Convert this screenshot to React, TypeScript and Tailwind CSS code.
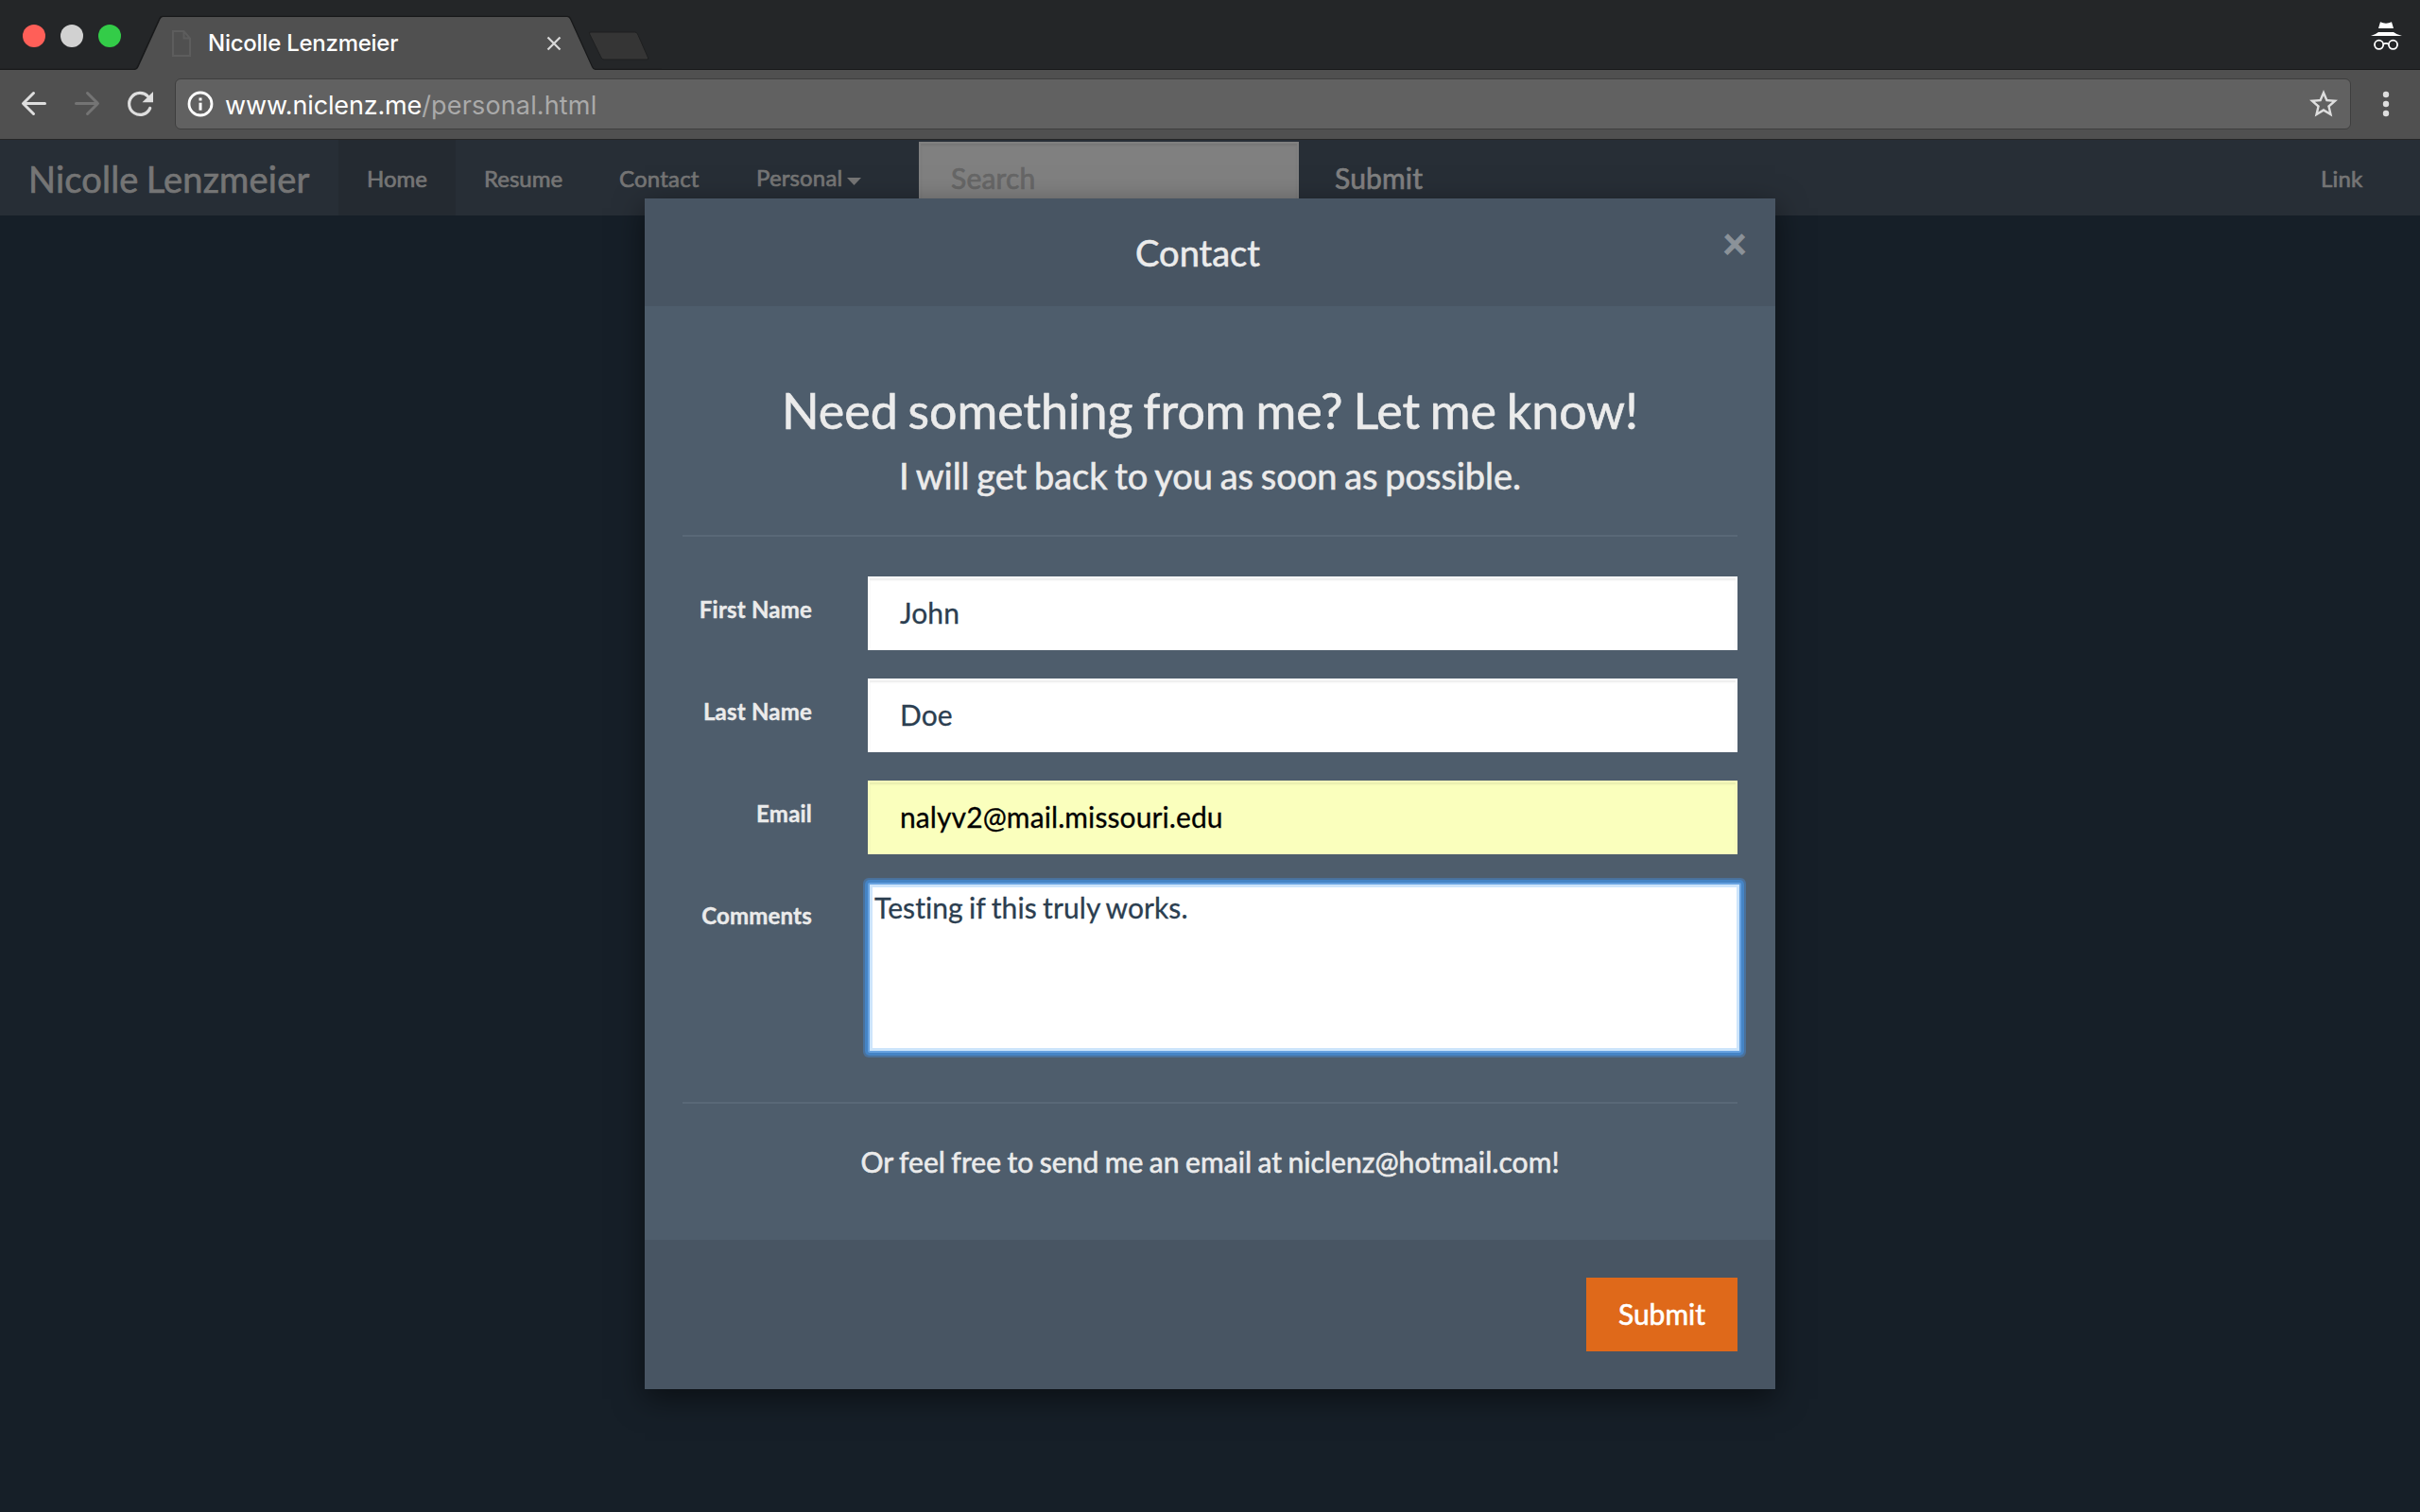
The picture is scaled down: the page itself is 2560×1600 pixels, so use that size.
import type { ReactNode } from "react";

function TabStrip() {
  return (
    <div className="relative flex h-[74px] justify-between bg-[#242628]">
      <svg className="block" width="700" height="74" viewBox="0 0 700 74">
        <circle cx="36" cy="38" r="12" fill="#ff5f58" />
        <circle cx="76" cy="38" r="12" fill="#d1d1d1" />
        <circle cx="116" cy="38" r="12" fill="#33cc48" />
        <path d="M0 73.5H142Q144.5 73.5 145.5 71L168.5 20.5Q169.7 17.5 172 17.5H600Q602.5 17.5 603.7 20.5L626.5 71Q627.5 73.5 630 73.5H700" fill="none" stroke="#18191a" strokeWidth="1.5" />
        <path d="M143 74Q145.5 73.5 146.5 71L169.5 20.5Q170.5 18 172.5 18H600Q602 18 603 20.5L626 71Q627 73.5 629.5 74Z" fill="#505050" />
        <path d="M625 34H671.5Q673.5 34 674.5 36L685.5 61Q686.5 63 684 63H639Q637 63 636 61L623.7 36Q622.5 34 625 34Z" fill="#353535" stroke="#1e1f20" strokeWidth="1" />
        <path d="M183 33H194.5L201 40.5V59H183ZM194.5 33V40.5H201" fill="none" stroke="#5d5d5d" strokeWidth="2" />
        <path d="M579.5 39.5L592.5 52.5M592.5 39.5L579.5 52.5" stroke="#d9d9d9" strokeWidth="2.2" />
      </svg>
      <span className="absolute left-[220px] top-[31px] font-[Inter,sans-serif] text-[24px] font-medium leading-[30px] tracking-[-0.25px] whitespace-nowrap text-white">
        Nicolle Lenzmeier
      </span>
      <div className="h-full flex-1 border-b border-[#18191a]" />
      <svg className="absolute right-[16px] top-[18px]" width="40" height="40" viewBox="2504 18 40 40">
        <path d="M2516 30L2518 23.3Q2524 26 2530 23.3L2532 30Z" fill="#fff" />
        <path d="M2508 38Q2513 36.5 2516 34H2532Q2535 36.5 2541 38Z" fill="#fff" />
        <circle cx="2516.6" cy="47.3" r="4.6" fill="none" stroke="#fff" strokeWidth="1.8" />
        <circle cx="2531.5" cy="47.3" r="4.6" fill="none" stroke="#fff" strokeWidth="1.8" />
        <path d="M2521 46.7Q2524 45 2527 46.7" fill="none" stroke="#fff" strokeWidth="1.6" />
      </svg>
    </div>
  );
}

function Toolbar() {
  return (
    <div className="flex h-[74px] items-start border-b border-[#262626] bg-[#505050] pt-[9px]">
      <svg className="block w-[185px]" height="54" viewBox="0 83 185 54">
        <path d="M47.5 109.5H25M35.5 98.5L24.5 109.5L35.5 120.5" fill="none" stroke="#dedede" strokeWidth="3" strokeLinecap="round" strokeLinejoin="round" />
        <path d="M80.5 109.5H103M92.5 98.5L103.5 109.5L92.5 120.5" fill="none" stroke="#747474" strokeWidth="3" strokeLinecap="round" strokeLinejoin="round" />
        <path d="M158.7 114.5A11.5 11.5 0 1 1 156.5 102" fill="none" stroke="#dedede" strokeWidth="3.2" strokeLinecap="round" />
        <path d="M162 97V108.3H150.5Z" fill="#dedede" />
      </svg>
      <div className="flex h-[54px] w-[2302px] items-center rounded-[6px] border border-[#3e3e3e] bg-[#616161] pl-[12px] pr-[10px]">
        <svg width="28" height="28" viewBox="198 96 28 28">
          <circle cx="212" cy="110" r="12" fill="none" stroke="#fff" strokeWidth="2.8" />
          <rect x="210.5" y="103.5" width="3" height="3" fill="#fff" />
          <rect x="210.5" y="108.7" width="3" height="8" fill="#fff" />
        </svg>
        <div className="ml-[12px] flex-1 pt-[3px] font-[Inter,sans-serif] text-[27px] leading-[34px] tracking-[-0.15px] text-white">
          www.niclenz.me<span className="tracking-[0.15px] text-[#aaaaaa]">/personal.html</span>
        </div>
        <svg width="36" height="36" viewBox="0 0 24 24" fill="#dedede">
          <path d="M22 9.24l-7.19-.62L12 2 9.19 8.63 2 9.24l5.46 4.73L5.82 21 12 17.27 18.18 21l-1.63-7.03L22 9.24zM12 15.4l-3.76 2.27 1-4.28-3.32-2.88 4.38-.38L12 6.1l1.71 4.04 4.38.38-3.32 2.88 1 4.28L12 15.4z" />
        </svg>
      </div>
      <svg className="ml-[29px] h-[54px] w-[16px]" viewBox="2516 83 16 54" fill="#dedede">
        <circle cx="2524" cy="100" r="3.2" />
        <circle cx="2524" cy="110" r="3.2" />
        <circle cx="2524" cy="120" r="3.2" />
      </svg>
    </div>
  );
}

function NavItem({ children, width, active }: { children: ReactNode; width: string; active?: boolean }) {
  return (
    <a className={`flex h-full items-center pl-[30px] pt-[2px] text-[24px] ${width} ${active ? "bg-[#242a31]" : ""}`}>
      {children}
    </a>
  );
}

function Navbar() {
  return (
    <nav className="flex h-[80px] bg-[#272e36] whitespace-nowrap text-[#757575] [-webkit-text-stroke:0.7px]">
      <div className="flex w-[358px] items-center pl-[30px] pt-[2px] text-[38px] tracking-[0.2px] [word-spacing:-0.047em]">Nicolle Lenzmeier</div>
      <NavItem width="w-[124px]" active>Home</NavItem>
      <NavItem width="w-[143px]">Resume</NavItem>
      <NavItem width="w-[145px]">
        <span className="tracking-[0.2px]">Contact</span>
      </NavItem>
      <NavItem width="w-[172px]">
        <span className="-mt-[2px] tracking-[0.15px]">Personal</span>
        <svg className="ml-[5px] mt-[6px]" width="15" height="8" viewBox="0 0 16 8" preserveAspectRatio="none">
          <path d="M0 0H16L8 8Z" fill="#757575" />
        </svg>
      </NavItem>
      <div className="mt-[2px] ml-[30px] flex h-[78px] w-[402px] items-center border-2 border-[#808080] bg-[#808080] pb-px pl-[32px] text-[30px] text-[#666666] shadow-[inset_0_2px_2px_rgba(0,0,0,0.075)] tracking-[0.2px]">
        Search
      </div>
      <div className="mt-[2px] ml-[38px] flex items-center pb-px text-[30px] tracking-[0.15px] text-[#808080]">Submit</div>
      <div className="ml-auto mr-[30px] flex w-[105px] items-center pl-[30px] pt-[2px] text-[24px] tracking-[0.2px]">Link</div>
    </nav>
  );
}

function Row({ label, children }: { label: string; children: ReactNode }) {
  return (
    <div className="mb-[30px] flex">
      <div className="h-[70px] w-[137px] shrink-0 text-right text-[24px] font-bold leading-[70px] tracking-[0.2px] [-webkit-text-stroke:0.4px]">{label}</div>
      <div className="ml-[59px] shrink-0 [-webkit-text-stroke:0.3px]">{children}</div>
    </div>
  );
}

function Field({ value, tone }: { value: string; tone: string }) {
  return (
    <div className={`h-[78px] w-[920px] border-2 pl-[32px] text-[30px] leading-[72px] tracking-[0.1px] shadow-[inset_0_2px_2px_rgba(0,0,0,0.075)] ${tone}`}>
      {value}
    </div>
  );
}

function ContactModal() {
  return (
    <section className="absolute left-[682px] top-[210px] flex h-[1260px] w-[1196px] flex-col bg-[#4e5d6c] text-[#ebebeb] shadow-[0_10px_30px_rgba(0,0,0,0.5)] [-webkit-text-stroke:0.6px]">
      <header className="relative flex h-[114px] justify-center bg-[#485563] pr-[26px] text-[38px] leading-[114px]">
        Contact
        <span className="absolute right-[30px] top-[20px] text-[45px] font-bold leading-[54px] text-[#8b9299] [-webkit-text-stroke:1px]">×</span>
      </header>
      <div className="h-[988px] px-[40px] pt-[82px]">
        <h3 className="h-[56px] text-center text-[52px] leading-[56px] tracking-[-0.03px] [word-spacing:-0.047em]">Need something from me? Let me know!</h3>
        <h4 className="mt-[20px] h-[42px] text-center text-[38px] leading-[42px] tracking-[-0.06px] [word-spacing:-0.047em]">I will get back to you as soon as possible.</h4>
        <hr className="mt-[42px] mb-[42px] h-[2px] border-0 bg-[#596877]" />
        <Row label="First Name">
          <Field value="John" tone="border-white bg-white text-[#2b3e50]" />
        </Row>
        <Row label="Last Name">
          <Field value="Doe" tone="border-white bg-white text-[#2b3e50]" />
        </Row>
        <Row label="Email">
          <Field value="nalyv2@mail.missouri.edu" tone="border-[#faffbd] bg-[#faffbd] text-black" />
        </Row>
        <Row label="Comments">
          <div className="h-[180px] w-[924px] rounded-[2px] border-2 border-[#67a2e0] bg-white pl-[5px] pt-[3px] text-[30px] leading-[42px] tracking-[0.08px] [word-spacing:-0.047em] text-[#2b3e50] shadow-[inset_0_0_0_3px_#cde5fb,0_0_0_3px_#4584c5,0_0_0_5px_#4a719b]">
            Testing if this truly works.
          </div>
        </Row>
        <hr className="mt-[52px] h-[2px] border-0 bg-[#596877]" />
        <p className="mt-[40px] text-center text-[30px] leading-[42px] tracking-[0.08px] [word-spacing:-0.047em]">
          Or feel free to send me an email at niclenz@hotmail.com!
        </p>
      </div>
      <footer className="flex flex-1 items-start justify-end bg-[#485563] pt-[40px] pr-[40px]">
        <button className="h-[78px] w-[160px] bg-[#df691a] pb-[2px] text-[30px] leading-[76px] text-white">Submit</button>
      </footer>
    </section>
  );
}

export default function App() {
  return (
    <div className="relative h-[1600px] w-[2560px] overflow-hidden bg-[#161f28] font-[Lato,sans-serif]">
      <TabStrip />
      <Toolbar />
      <Navbar />
      <ContactModal />
    </div>
  );
}
